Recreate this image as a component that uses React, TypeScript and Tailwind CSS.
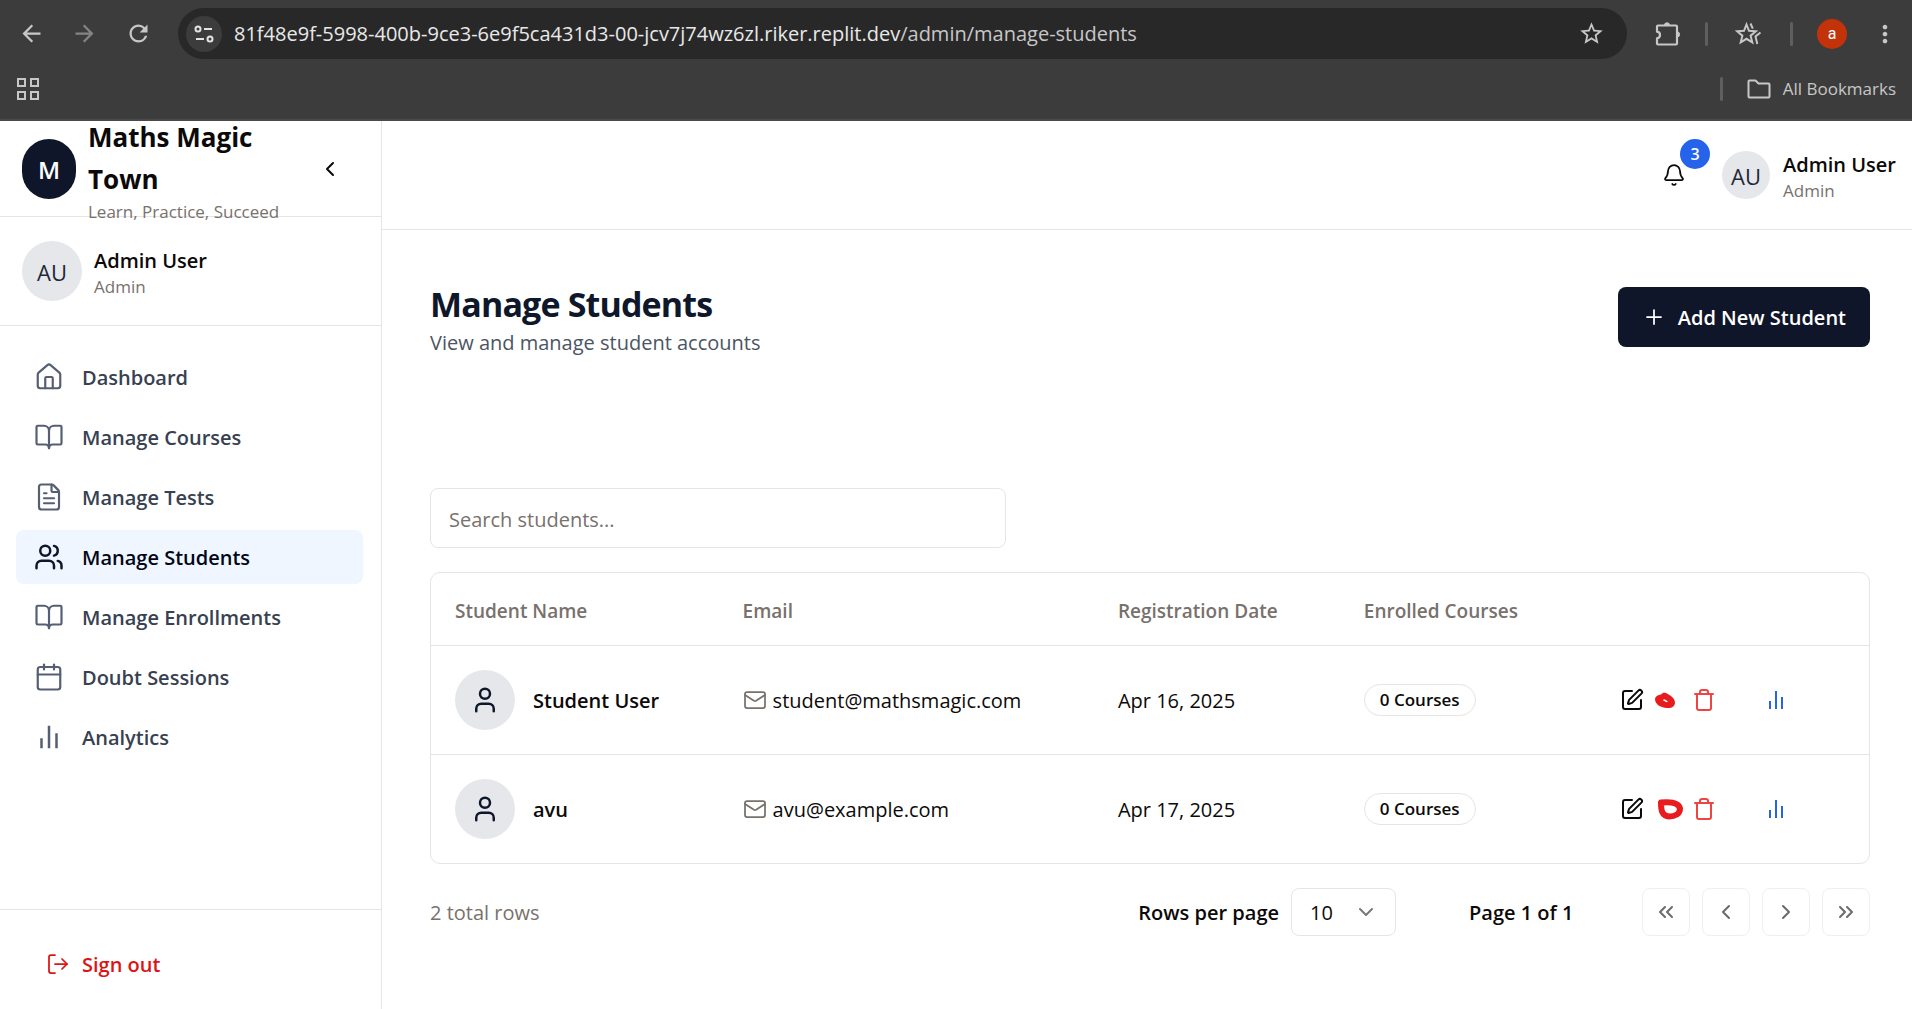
import type { ReactNode } from "react";
import {
  Bell,
  BookOpen,
  Calendar,
  ChevronDown,
  ChevronLeft,
  ChevronRight,
  ChevronsLeft,
  ChevronsRight,
  FileText,
  House,
  LogOut,
  Mail,
  Plus,
  SquarePen,
  Trash,
  User,
  Users,
} from "lucide-react";
import { MdArrowBack, MdArrowForward, MdMoreVert, MdRefresh, MdStarBorder } from "react-icons/md";

function BarsIcon({ size }: { size: number }) {
  return (
    <svg width={size} height={size} viewBox="0 0 24 24" fill="none" stroke="currentColor" strokeWidth={2} aria-hidden="true">
      <path d="M6 21v-8M12 21V3M18 21V9" />
    </svg>
  );
}

function SiteInfoIcon() {
  return (
    <svg width={20} height={20} viewBox="0 0 20 20" fill="none" stroke="currentColor" strokeWidth={2} aria-hidden="true">
      <circle cx="4" cy="5" r="2.5" />
      <path d="M10 5h8M2 15h8" />
      <circle cx="16" cy="15" r="2.5" />
    </svg>
  );
}

function AppsIcon() {
  return (
    <svg width={22} height={22} viewBox="0 0 22 22" fill="none" stroke="currentColor" strokeWidth={2} aria-hidden="true">
      <rect x="1" y="1" width="7" height="7" />
      <rect x="14" y="1" width="7" height="7" />
      <rect x="1" y="14" width="7" height="7" />
      <rect x="14" y="14" width="7" height="7" />
    </svg>
  );
}

function ExtensionIcon() {
  return (
    <svg width={26} height={26} viewBox="0 0 26 26" fill="none" stroke="currentColor" strokeWidth={2.2} strokeLinejoin="round" aria-hidden="true">
      <path d="M3 4.5h18a1 1 0 0 1 1 1v17a1 1 0 0 1-1 1H3a1 1 0 0 1-1-1v-5.200c4-.5 4-6.100 0-6.600V5.500a1 1 0 0 1 1-1z" />
      <path d="M9.300 4.500a2.700 2.700 0 0 1 5.400 0zM22 10.800a2.600 2.600 0 0 1 0 5.200z" fill="currentColor" strokeWidth={1} />
    </svg>
  );
}

function StarsIcon() {
  return (
    <svg width={28} height={26} viewBox="0 0 28 26" fill="none" stroke="currentColor" strokeWidth={2} aria-hidden="true">
      <path d="M12.500 3.500l2.500 6.300 6.800.5-5.200 4.400 1.700 6.700-5.800-3.600-5.800 3.600 1.700-6.700-5.200-4.400 6.800-.5z" />
      <path d="M16.500 2.500l2.300 5.200M26.500 11.500l-5 4 1.800 7.500" />
    </svg>
  );
}

function FolderIcon() {
  return (
    <svg width={24} height={20} viewBox="0 0 24 20" fill="none" stroke="currentColor" strokeWidth={2} strokeLinejoin="round" aria-hidden="true">
      <path d="M1.500 2.500a1 1 0 0 1 1-1h6l3 3h10a1 1 0 0 1 1 1v12a1 1 0 0 1-1 1h-19a1 1 0 0 1-1-1z" />
    </svg>
  );
}

function SmallScribble() {
  return (
    <svg width={24} height={24} viewBox="0 0 24 24" className="shrink-0 overflow-visible" aria-hidden="true">
      <path d="M-1 11.500c0-3 3-4.500 6-5 2-2.500 5-2 7.500 0 3.500 2 6.500 4.500 6.500 8.500-.5 4-4 5.500-8 5-6-.5-11.500-3-12-8.500z" fill="#e81c1c" />
      <path d="M6.500 12l2-.8 3.500 2.300-1.500.7z" fill="#fff" />
    </svg>
  );
}

function LargeScribble() {
  return (
    <svg width={32} height={24} viewBox="0 0 32 24" className="shrink-0" aria-hidden="true">
      <path
        d="M9 5.500c8-.8 17.500-.5 19 6 0 5.500-5 8-11 8-7-.5-8-6-8-14z"
        fill="none"
        stroke="#e81c1c"
        strokeWidth="6"
        strokeLinejoin="round"
      />
    </svg>
  );
}

function IconButton({ label, className, children }: { label: string; className: string; children: ReactNode }) {
  return (
    <button type="button" aria-label={label} className={`flex shrink-0 items-center justify-center ${className}`}>
      {children}
    </button>
  );
}

function BrowserBar() {
  return (
    <div className="bg-[#3c3c3c] text-[#c7c7c7]">
      <div className="flex h-[67px] items-center pr-[13px] pl-[17px]">
        <IconButton label="Back" className="w-7"><MdArrowBack size={27} /></IconButton>
        <IconButton label="Forward" className="ml-[25px] w-7 text-[#848484]"><MdArrowForward size={27} /></IconButton>
        <IconButton label="Reload" className="ml-[26px] w-7"><MdRefresh size={27} /></IconButton>
        <div className="ml-[26px] flex h-[51px] flex-1 items-center rounded-full bg-[#282828] pr-[22px] pl-2">
          <IconButton label="Site information" className="size-9 rounded-full bg-[#3c3c3c] text-[#e3e3e3]">
            <SiteInfoIcon />
          </IconButton>
          <p className="ml-3 flex-1 text-[20px] whitespace-nowrap text-[#c7c7c7]">
            <span className="text-[#e8e8e8]">81f48e9f-5998-400b-9ce3-6e9f5ca431d3-00-jcv7j74wz6zl.riker.replit.dev</span>
            /admin/manage-students
          </p>
          <IconButton label="Bookmark this page" className="w-7"><MdStarBorder size={27} /></IconButton>
        </div>
        <IconButton label="Extensions" className="ml-7 w-[26px]"><ExtensionIcon /></IconButton>
        <span className="ml-[24px] h-6 w-[3px] rounded bg-[#5f5f5f]" />
        <IconButton label="Favourites" className="ml-[26px] w-7"><StarsIcon /></IconButton>
        <span className="ml-[28px] h-6 w-[3px] rounded bg-[#5f5f5f]" />
        <button type="button" className="ml-6 size-[30px] rounded-full bg-[#c4320a] font-[Roboto] text-base text-white">a</button>
        <IconButton label="Menu" className="ml-6 w-7"><MdMoreVert size={30} /></IconButton>
      </div>
      <div className="flex h-[54px] items-center border-b-2 border-[#4a4a4a] pr-4 pb-[9px] pl-[17px]">
        <IconButton label="Apps" className="w-[22px]"><AppsIcon /></IconButton>
        <span className="ml-auto h-6 w-[3px] rounded bg-[#5f5f5f]" />
        <button type="button" className="ml-6 flex items-center gap-3 text-[17px]">
          <FolderIcon />
          All Bookmarks
        </button>
      </div>
    </div>
  );
}

const navItems = [
  { label: "Dashboard", icon: <House size={30} strokeWidth={1.75} /> },
  { label: "Manage Courses", icon: <BookOpen size={30} strokeWidth={1.75} /> },
  { label: "Manage Tests", icon: <FileText size={30} strokeWidth={1.75} /> },
  { label: "Manage Students", icon: <Users size={30} />, active: true },
  { label: "Manage Enrollments", icon: <BookOpen size={30} strokeWidth={1.75} /> },
  { label: "Doubt Sessions", icon: <Calendar size={30} strokeWidth={1.75} /> },
  { label: "Analytics", icon: <BarsIcon size={30} /> },
];

function Sidebar() {
  return (
    <aside className="flex w-[382px] shrink-0 flex-col border-r border-[#e5e5e5]">
      <div className="flex h-24 items-center border-b border-[#e5e5e5] pr-[39px] pl-[22px]">
        <div className="flex h-[60px] w-[54px] shrink-0 items-center justify-center rounded-full bg-[#0f1629] pt-0.5 text-2xl font-semibold text-white">M</div>
        <div className="ml-3 w-[200px] pt-0.5">
          <p className="text-[26px] leading-[42px] font-bold">Maths Magic Town</p>
          <p className="text-[17px] leading-6 font-medium whitespace-nowrap text-[#78716c]">Learn, Practice, Succeed</p>
        </div>
        <IconButton label="Collapse sidebar" className="ml-auto size-6"><ChevronLeft size={24} /></IconButton>
      </div>
      <div className="flex items-center gap-3 border-b border-[#e5e5e5] px-[22px] py-6">
        <div className="flex size-[60px] items-center justify-center rounded-full bg-[#e5e7eb] pt-0.5 text-[22px] text-[#1f2937]">AU</div>
        <div className="pt-1">
          <p className="text-[20px] leading-7 font-semibold">Admin User</p>
          <p className="text-[17px] leading-6 text-[#78716c]">Admin</p>
        </div>
      </div>
      <nav className="flex flex-1 flex-col gap-1.5 py-6 pr-[18px] pl-4">
        {navItems.map((item) => (
          <a
            key={item.label}
            href="#"
            aria-current={item.active ? "page" : undefined}
            className={
              item.active
                ? "flex h-[54px] items-center gap-[18px] rounded-lg bg-[#eff6ff] pl-[18px] text-[#020617]"
                : "flex h-[54px] items-center gap-[18px] rounded-lg pl-[18px] text-[#374151]"
            }
          >
            <span className={item.active ? "text-[#0f172a]" : "text-[#555f73]"}>{item.icon}</span>
            <span className="pt-0.5 text-[20px] font-semibold">{item.label}</span>
          </a>
        ))}
      </nav>
      <div className="border-t border-[#e5e5e5] pt-6 pb-[15px] pl-[46px]">
        <button type="button" className="flex h-[60px] items-center gap-3 text-[20px] font-semibold text-[#dc1414]">
          <LogOut size={24} strokeWidth={1.75} />
          <span className="pt-0.5">Sign out</span>
        </button>
      </div>
    </aside>
  );
}

function TopHeader() {
  return (
    <header className="flex h-[109px] items-center justify-end border-b border-[#e5e5e5] pr-4">
      <button type="button" aria-label="3 notifications" className="relative">
        <Bell size={24} strokeWidth={1.75} />
        <span className="absolute bottom-[18px] left-[18px] flex size-[30px] items-center justify-center rounded-full bg-[#2563eb] text-base font-semibold text-white">
          3
        </span>
      </button>
      <button type="button" className="ml-9 flex items-center gap-[13px] text-left">
        <span className="flex size-12 items-center justify-center rounded-full bg-[#e5e7eb] pt-0.5 text-[22px] text-[#1f2937]">AU</span>
        <span className="pt-1">
          <span className="block text-[20px] leading-7 font-semibold">Admin User</span>
          <span className="block text-[17px] leading-6 text-[#78716c]">Admin</span>
        </span>
      </button>
    </header>
  );
}

const students = [
  { name: "Student User", email: "student@mathsmagic.com", date: "Apr 16, 2025", mark: <SmallScribble /> },
  { name: "avu", email: "avu@example.com", date: "Apr 17, 2025", mark: <LargeScribble /> },
];

function StudentTable() {
  return (
    <div className="mt-6 overflow-hidden rounded-[10px] border border-[#e5e5e5]">
      <table className="w-full table-fixed text-left text-[20px]">
        <colgroup>
          <col className="w-[20%]" />
          <col className="w-[26.1%]" />
          <col className="w-[17.1%]" />
          <col className="w-[17.8%]" />
          <col />
        </colgroup>
        <thead>
          <tr className="h-[72px] border-b border-[#e5e5e5] text-[19px] text-[#78716c]">
            <th className="px-6 pt-1 font-semibold">Student Name</th>
            <th className="px-6 pt-1 font-semibold">Email</th>
            <th className="px-6 pt-1 font-semibold">Registration Date</th>
            <th className="px-6 pt-1 font-semibold">Enrolled Courses</th>
            <td aria-label="Actions" />
          </tr>
        </thead>
        <tbody>
          {students.map((s) => (
            <tr key={s.name} className="h-[109px] border-b border-[#e5e5e5] last:border-b-0">
              <td className="px-6">
                <div className="flex items-center gap-[18px] font-semibold">
                  <span className="flex size-[60px] shrink-0 items-center justify-center rounded-full bg-[#e5e7eb] text-[#0f172a]">
                    <User size={30} />
                  </span>
                  <span className="pt-0.5">{s.name}</span>
                </div>
              </td>
              <td className="px-6">
                <div className="flex items-center gap-1.5">
                  <Mail size={24} strokeWidth={1.75} className="shrink-0 text-[#78716c]" />
                  <span className="pt-0.5">{s.email}</span>
                </div>
              </td>
              <td className="px-6 pt-0.5">{s.date}</td>
              <td className="px-6">
                <span className="inline-flex h-8 items-center rounded-full border border-[#e5e5e5] px-[15px] text-[17px] font-semibold">0 Courses</span>
              </td>
              <td className="px-6">
                <div className="flex items-center gap-3">
                  <IconButton label={`Edit ${s.name}`} className="size-6"><SquarePen size={24} /></IconButton>
                  <IconButton label={`View ${s.name}`} className="size-6">{s.mark}</IconButton>
                  <IconButton label={`Delete ${s.name}`} className="size-6 text-[#ef4444]"><Trash size={24} /></IconButton>
                  <IconButton label={`Statistics for ${s.name}`} className="ml-9 size-6 text-[#2563eb]"><BarsIcon size={24} /></IconButton>
                </div>
              </td>
            </tr>
          ))}
        </tbody>
      </table>
    </div>
  );
}

const pageButton = "size-12 rounded-lg border border-[#e5e5e5] opacity-60";

function Pagination() {
  return (
    <div className="mt-6 flex items-center text-[20px]">
      <p className="flex-1 pt-0.5 text-[#78716c]">2 total rows</p>
      <label htmlFor="rows" className="pt-0.5 font-semibold">Rows per page</label>
      <div className="relative ml-3">
        <select id="rows" defaultValue="10" className="h-12 w-[105px] appearance-none rounded-lg border border-[#e5e5e5] bg-white pt-0.5 pl-[18px]">
          <option>10</option>
          <option>20</option>
          <option>50</option>
        </select>
        <ChevronDown size={24} className="pointer-events-none absolute top-3 right-[18px] text-[#777]" />
      </div>
      <p className="ml-[73px] w-[173px] pt-0.5 font-semibold">Page 1 of 1</p>
      <div className="flex gap-3">
        <IconButton label="First page" className={pageButton}><ChevronsLeft size={24} /></IconButton>
        <IconButton label="Previous page" className={pageButton}><ChevronLeft size={24} /></IconButton>
        <IconButton label="Next page" className={pageButton}><ChevronRight size={24} /></IconButton>
        <IconButton label="Last page" className={pageButton}><ChevronsRight size={24} /></IconButton>
      </div>
    </div>
  );
}

export default function App() {
  return (
    <div className="flex min-h-screen flex-col bg-white font-['Open_Sans',sans-serif] text-[#0c0a09]">
      <BrowserBar />
      <div className="flex flex-1">
        <Sidebar />
        <div className="min-w-0 flex-1">
          <TopHeader />
          <main className="pr-[42px] pl-12">
            <div className="flex items-start justify-between pt-[57px]">
              <div>
                <h1 className="text-[34px] leading-[34px] font-bold tracking-tight text-[#0f172a]">Manage Students</h1>
                <p className="mt-1.5 text-[20px] leading-8 text-[#4b5563]">View and manage student accounts</p>
              </div>
              <button type="button" className="flex h-[60px] items-center gap-3 rounded-lg bg-[#0f1629] px-6 text-[20px] font-semibold text-white">
                <Plus size={24} strokeWidth={1.75} />
                <span className="pt-0.5">Add New Student</span>
              </button>
            </div>
            <input
              type="text"
              aria-label="Search students"
              placeholder="Search students..."
              className="mt-[129px] block h-[60px] w-full max-w-[576px] rounded-lg border border-[#e5e5e5] px-[18px] pt-0.5 text-[20px] placeholder:text-[#78716c]"
            />
            <StudentTable />
            <Pagination />
          </main>
        </div>
      </div>
    </div>
  );
}
